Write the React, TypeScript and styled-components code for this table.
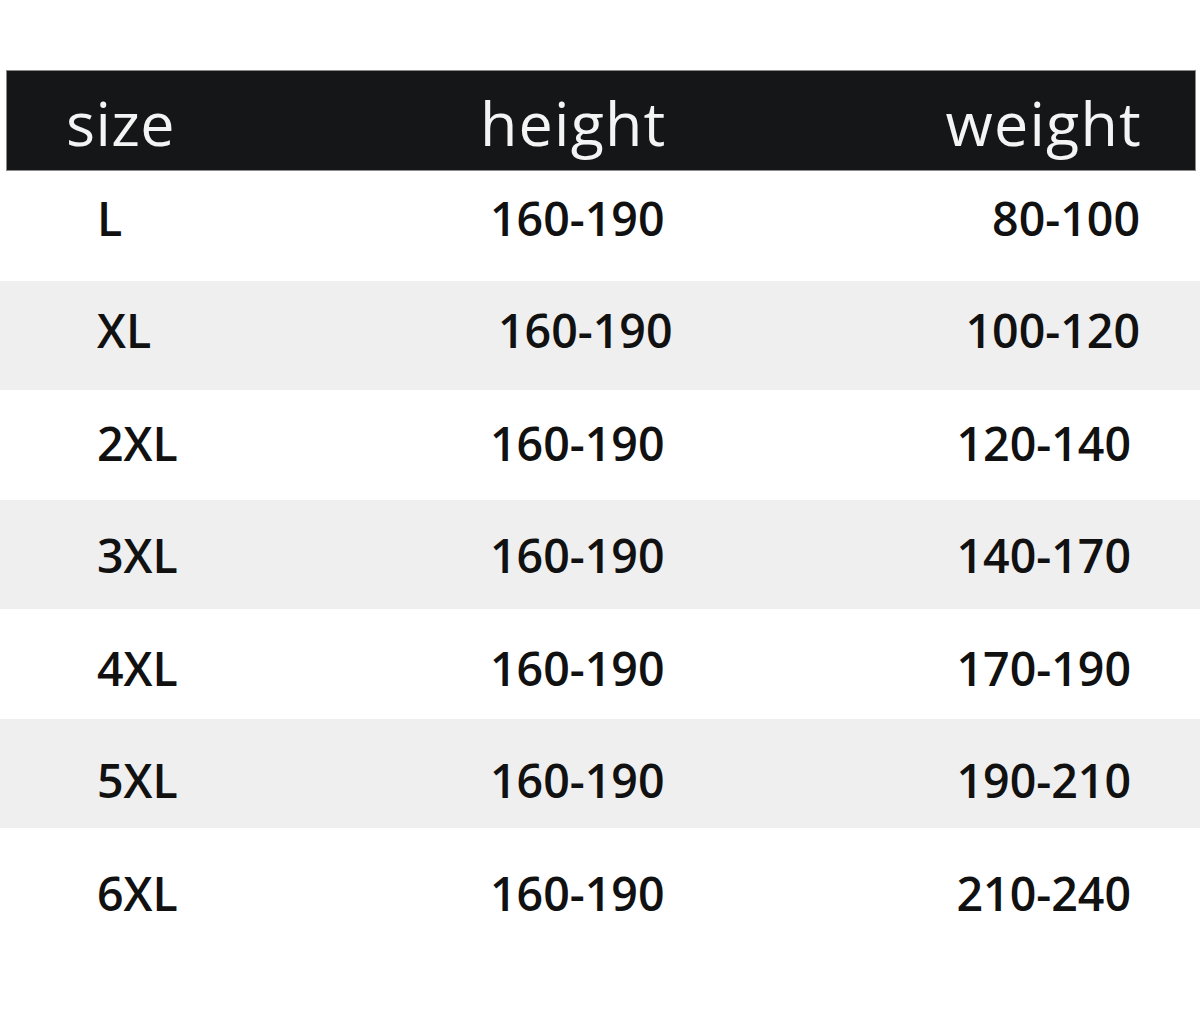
import React from 'react'
import styled, { createGlobalStyle } from 'styled-components'

const GlobalStyle = createGlobalStyle`
	html, body {
		margin: 0;
		padding: 0;
		background: #ffffff;
	}
	body {
		font-family: "Open Sans", "Noto Sans", "Liberation Sans", sans-serif;
	}
`

interface SizeRow {
	size: string
	height: string
	weight: string
	heightShift?: number
	weightShift?: number
}

const rows: SizeRow[] = [
	{ size: 'L', height: '160-190', weight: '80-100' },
	{ size: 'XL', height: '160-190', weight: '100-120', heightShift: 8 },
	{ size: '2XL', height: '160-190', weight: '120-140', weightShift: 9 },
	{ size: '3XL', height: '160-190', weight: '140-170', weightShift: 9 },
	{ size: '4XL', height: '160-190', weight: '170-190', weightShift: 9 },
	{ size: '5XL', height: '160-190', weight: '190-210', weightShift: 9 },
	{ size: '6XL', height: '160-190', weight: '210-240', weightShift: 9 },
]

const App: React.FC = () => {
	return (
		<>
			<GlobalStyle />
			<StyledPage>
				<StyledHeader>
					<StyledHeadCell>size</StyledHeadCell>
					<StyledHeadCell $spacing={1.2}>height</StyledHeadCell>
					<StyledHeadCell $align="right" $spacing={1.2}>weight</StyledHeadCell>
				</StyledHeader>
				{rows.map((row, i) => {
					// text drifts down a little more on each row in the original chart
					const drop = (i * 3 - 8) * 2
					return (
						<StyledRow key={row.size} $shaded={i % 2 === 1}>
							<StyledCell $drop={drop}>{row.size}</StyledCell>
							<StyledCell $drop={drop} $shift={row.heightShift}>{row.height}</StyledCell>
							<StyledCell
								$drop={drop}
								$align="right"
								$shift={row.weightShift ? -row.weightShift : 0}
							>
								{row.weight}
							</StyledCell>
						</StyledRow>
					)
				})}
			</StyledPage>
		</>
	)
}

const StyledPage = styled.div`
	width: 1200px;
	height: 1019px;
	padding-top: 70px;
	box-sizing: border-box;
	background: #ffffff;
	overflow: hidden;
`

const StyledHeader = styled.div`
	margin: 0 4px 0 6px;
	height: 101px;
	box-sizing: border-box;
	background: #151618;
	border: 1px solid #8a8a8a;
	display: grid;
	grid-template-columns: 414px 1fr auto;
	align-items: center;
	padding: 3px 53px 0 59px;
`

const StyledHeadCell = styled.div<{ $align?: 'left' | 'right'; $spacing?: number }>`
	color: #f4f4f4;
	font-size: 61px;
	font-weight: 400;
	line-height: 1;
	text-align: ${(props) => props.$align || 'left'};
	letter-spacing: ${(props) => props.$spacing ?? 0.4}px;
`

const StyledRow = styled.div<{ $shaded: boolean }>`
	height: 109.5px;
	box-sizing: border-box;
	background: ${(props) => (props.$shaded ? '#efefef' : '#ffffff')};
	display: grid;
	grid-template-columns: 393px 1fr auto;
	align-items: center;
	padding: 0 60px 0 97px;
`

const StyledCell = styled.div<{ $align?: 'left' | 'right'; $shift?: number; $drop?: number }>`
	color: #111111;
	font-size: 46.5px;
	font-weight: 600;
	line-height: 1;
	margin-top: ${(props) => props.$drop || 0}px;
	text-align: ${(props) => props.$align || 'left'};
	transform: translateX(${(props) => props.$shift || 0}px);
`

export default App
